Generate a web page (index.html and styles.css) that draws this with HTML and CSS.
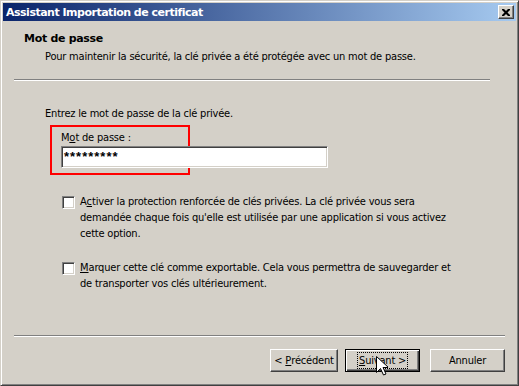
FILE: index.html
```html
<!DOCTYPE html>
<html>
<head>
<meta charset="utf-8">
<link rel="stylesheet" href="styles.css">
</head>
<body>
<div class="window">
  <div class="titlebar">
    <span class="title">Assistant Importation de certificat</span>
    <span class="close"><svg width="8" height="7" viewBox="0 0 8 7"><path d="M0 0h2l2 2 2-2h2v1l-2.5 2.5L8 6v1H6L4 5 2 7H0V6l2.5-2.5L0 1z" fill="#000"/></svg></span>
  </div>
  <div class="header">
    <div class="h-title">Mot de passe</div>
    <div class="h-sub">Pour maintenir la sécurité, la clé privée a été protégée avec un mot de passe.</div>
  </div>
  <div class="sep sep-top"></div>
  <div class="content">
    <div class="intro">Entrez le mot de passe de la clé privée.</div>
    <div class="pwbox">
      <div class="label">M<u>o</u>t de passe :</div>
      <div class="input">*********</div>
    </div>
    <div class="check">
      <span class="box"></span>
      <div class="ctext">
        <div class="line">A<u>c</u>tiver la protection renforcée de clés privées. La clé privée vous sera</div>
        <div class="line">demandée chaque fois qu'elle est utilisée par une application si vous activez</div>
        <div class="line">cette option.</div>
      </div>
    </div>
    <div class="check check2">
      <span class="box"></span>
      <div class="ctext">
        <div class="line"><u>M</u>arquer cette clé comme exportable. Cela vous permettra de sauvegarder et</div>
        <div class="line">de transporter vos clés ultérieurement.</div>
      </div>
    </div>
  </div>
  <div class="sep sep-bottom"></div>
  <div class="buttons">
    <div class="btn"><span>&lt; <u>P</u>récédent</span></div>
    <div class="btn default"><span class="inner"><u>S</u>uivant &gt;</span>
      <svg class="cursor" width="12" height="20" viewBox="0 0 12 20"><path d="M0.5 0.5v16l4-4 3 6.5 2.5-1-3-6.5h5.5z" fill="#fff" stroke="#000" stroke-width="1"/></svg>
    </div>
    <div class="btn cancel">Annuler</div>
  </div>
</div>
</body>
</html>
```
FILE: styles.css
```css
html, body { margin: 0; padding: 0; }
body {
  width: 519px; height: 386px; overflow: hidden;
  font-family: "DejaVu Sans Condensed", "DejaVu Sans", sans-serif;
  font-size: 11px;
  letter-spacing: -0.2px;
  color: #000;
  background: #d4d0c8;
}
u { letter-spacing: 0; }
.window {
  box-sizing: border-box;
  width: 519px; height: 386px;
  border-style: solid;
  border-width: 1px;
  border-color: #d4d0c8 #404040 #404040 #d4d0c8;
  box-shadow: inset 1px 1px 0 #fff, inset -1px -1px 0 #808080;
  padding: 2px;
  background: #d4d0c8;
  display: flex; flex-direction: column;
  position: relative;
}
.titlebar {
  height: 18px;
  background: linear-gradient(to right, #0a246a, #a6caf0);
  display: flex; align-items: center; justify-content: space-between;
  padding: 0 2px 0 3px;
}
.title { color: #fff; font-weight: bold; font-family: "DejaVu Sans", sans-serif; font-size: 11px; letter-spacing: -0.5px; }
.close {
  box-sizing: border-box;
  width: 16px; height: 14px;
  background: #d4d0c8;
  border: 1px solid; border-color: #fff #404040 #404040 #fff;
  box-shadow: inset -1px -1px 0 #808080;
  display: flex; align-items: center; justify-content: center;
}
.header { padding: 11px 0 0 21px; height: 55px; box-sizing: border-box; }
.h-title { font-weight: bold; font-family: "DejaVu Sans", sans-serif; height: 18px; letter-spacing: -0.3px; }
.h-sub { padding-left: 21px; }
.sep { height: 1px; border-bottom: 1px solid #fff; background: #808080; }
.sep-top { margin: 3px 26px 0 11px; }
.sep-bottom { margin: 0 11px 0 11px; }
.content { height: 254px; box-sizing: border-box; padding: 26px 0 0 42px; }
.intro { height: 18px; }
.pwbox {
  width: 140px; height: 50px; box-sizing: border-box;
  border: 2px solid #f00;
  margin-left: 5px;
  position: relative;
  padding: 4px 0 0 9px;
}
.label { height: 15px; }
.input {
  box-sizing: border-box;
  width: 267px; height: 22px;
  background: #fff;
  border: 1px solid; border-color: #808080 #fff #fff #808080;
  box-shadow: inset 1px 1px 0 #404040, inset -1px -1px 0 #d4d0c8;
  padding: 2px 2px;
  font-family: "Liberation Sans", sans-serif;
  font-size: 13px; font-weight: bold; letter-spacing: 1px; line-height: 16px;
}
.check { display: flex; margin: 21px 0 0 17px; }
.check2 { margin-top: 20px; }
.box {
  flex: none;
  box-sizing: border-box;
  width: 13px; height: 13px;
  background: #fff;
  border: 1px solid; border-color: #808080 #fff #fff #808080;
  box-shadow: inset 1px 1px 0 #404040, inset -1px -1px 0 #d4d0c8;
}
.ctext { margin-left: 5px; line-height: 16px; margin-top: -2px; }
.line { white-space: nowrap; }
.buttons { display: flex; justify-content: flex-end; padding: 12px 11px 0 0; }
.btn {
  box-sizing: border-box;
  width: 75px; height: 23px;
  border: 1px solid; border-color: #fff #404040 #404040 #fff;
  box-shadow: inset -1px -1px 0 #808080;
  display: flex; align-items: center; justify-content: center;
  position: relative;
}
.btn:first-child { width: 68px; }
.default {
  margin-left: 7px;
  border: 1px solid #000;
  box-shadow: inset 1px 1px 0 #fff, inset -1px -1px 0 #404040, inset -2px -2px 0 #808080;
}
.default .inner { outline: 1px dotted #000; outline-offset: 1px; }
.cancel { margin-left: 10px; }
.cursor { position: absolute; left: 30px; top: 6px; }
```
